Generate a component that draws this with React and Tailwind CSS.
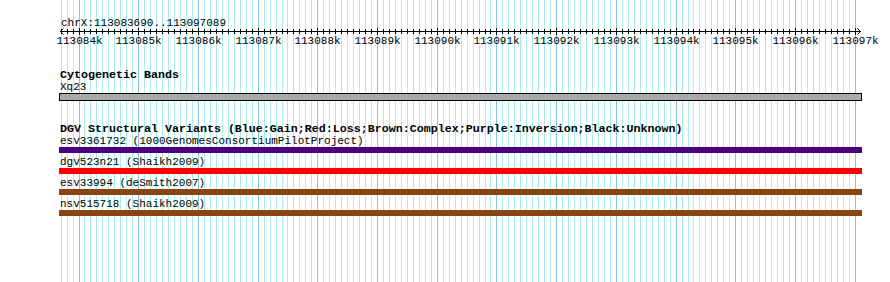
const START = 113083690
const END = 113097089
const LEFT = 60
const SPAN = 800

const toX = (pos) => Math.round(LEFT + ((pos - START) * SPAN) / (END - START))

const marks = []
for (let p = 113083700; p <= 113097000; p += 100) marks.push(p)

const variants = [
  { label: 'esv3361732 (1000GenomesConsortiumPilotProject)', bar: 'bg-[#4b0082]' },
  { label: 'dgv523n21 (Shaikh2009)', bar: 'bg-[#ff0000]' },
  { label: 'esv33994 (deSmith2007)', bar: 'bg-[#8b4513]' },
  { label: 'nsv515718 (Shaikh2009)', bar: 'bg-[#8b4513]' },
]

const mono = 'Liberation Mono, monospace'

function Grid() {
  return (
    <svg className="absolute inset-0" width="890" height="282">
      {marks.map((p) => {
        const x = toX(p) + 0.5
        const major = p % 1000 === 0
        return (
          <line
            key={p}
            x1={x}
            x2={x}
            y1={0}
            y2={282}
            stroke={major ? '#87c3e8' : '#afeeee'}
            strokeWidth="1"
          />
        )
      })}
    </svg>
  )
}

function Ruler() {
  return (
    <svg className="block" width="890" height="69">
      <text x="61" y="25.5" fontFamily={mono} fontSize="11" fill="#000">
        chrX:113083690..113097089
      </text>
      <line x1="60" x2="861" y1="31.5" y2="31.5" stroke="#000" />
      <polyline points="63.5,28.5 60.5,31.5 63.5,34.5" fill="none" stroke="#000" />
      <polyline points="857.5,28.5 860.5,31.5 857.5,34.5" fill="none" stroke="#000" />
      {marks.map((p) => {
        const x = toX(p) + 0.5
        const major = p % 1000 === 0
        return (
          <g key={p}>
            <line x1={x} x2={x} y1={major ? 28 : 29} y2={major ? 35 : 34} stroke="#000" />
            {major && (
              <text x={x} y="44" textAnchor="middle" fontFamily={mono} fontSize="11" fill="#000">
                {p / 1000}k
              </text>
            )}
          </g>
        )
      })}
    </svg>
  )
}

function Title({ children }) {
  return (
    <p className="h-[12px] pl-[60px] font-['Liberation_Mono',monospace] text-[11.67px] leading-[12px] font-bold text-black whitespace-nowrap">
      {children}
    </p>
  )
}

function Label({ children }) {
  return (
    <p className="h-[12px] pl-[60px] font-['Liberation_Mono',monospace] text-[11px] leading-[12px] text-black whitespace-nowrap">
      {children}
    </p>
  )
}

export default function App() {
  return (
    <div className="relative w-[890px] h-[282px] overflow-hidden bg-white">
      <Grid />
      <div className="relative flex flex-col">
        <Ruler />

        <Title>Cytogenetic Bands</Title>
        <Label>Xq23</Label>
        <div className="ml-[59px] w-[803px] h-[8px] border border-black bg-[#aaaaaa]" />

        <div className="mt-[22px]">
          <Title>
            DGV Structural Variants (Blue:Gain;Red:Loss;Brown:Complex;Purple:Inversion;Black:Unknown)
          </Title>
          <div className="flex flex-col gap-[3px]">
            {variants.map((v) => (
              <div key={v.label}>
                <Label>{v.label}</Label>
                <div className={`ml-[59px] w-[803px] h-[6px] ${v.bar}`} />
              </div>
            ))}
          </div>
        </div>
      </div>
    </div>
  )
}
